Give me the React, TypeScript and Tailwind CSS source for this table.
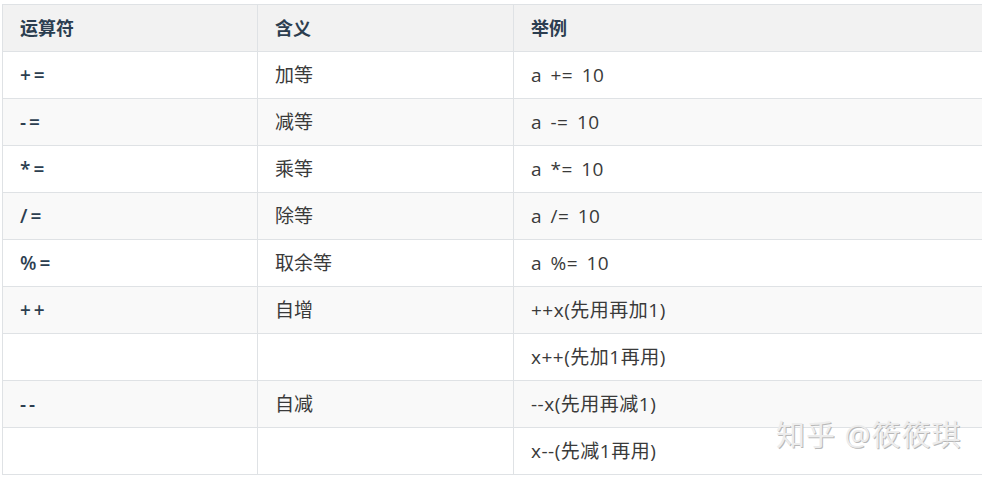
const ROWS: [string, string, string][] = [
  ["+=", "加等", "a += 10"],
  ["-=", "减等", "a -= 10"],
  ["*=", "乘等", "a *= 10"],
  ["/=", "除等", "a /= 10"],
  ["%=", "取余等", "a %= 10"],
  ["++", "自增", "++x(先用再加1)"],
  ["", "", "x++(先加1再用)"],
  ["--", "自减", "--x(先用再减1)"],
  ["", "", "x--(先减1再用)"],
];

export default function App() {
  return (
    <div className="relative h-[477px] w-[982px] overflow-hidden bg-white pl-[2px] pt-[4px] font-['Open_Sans','Noto_Sans_CJK_SC',sans-serif] text-[19px] text-[#3a3a3a]">
      <table className="w-[1000px] table-fixed border-collapse">
        <colgroup>
          <col className="w-[255px]" />
          <col className="w-[256px]" />
          <col />
        </colgroup>
        <thead>
          <tr className="h-[47px] bg-[#f2f2f2]">
            {["运算符", "含义", "举例"].map((h) => (
              <th key={h} className="border border-[#dfe2e5] px-[17px] text-left text-[18px] font-bold text-[#2c3e50]">
                {h}
              </th>
            ))}
          </tr>
        </thead>
        <tbody>
          {ROWS.map(([op, meaning, ex], i) => (
            <tr key={i} className={`h-[47px] ${i % 2 === 1 ? "bg-[#f9f9f9]" : "bg-white"}`}>
              <td className="border border-[#dfe2e5] px-[17px] font-semibold tracking-[3px] text-[#2c3e50]">{op}</td>
              <td className="border border-[#dfe2e5] px-[17px]">{meaning}</td>
              <td className="border border-[#dfe2e5] px-[17px] whitespace-pre tracking-[0.5px] [word-spacing:3px]">{ex}</td>
            </tr>
          ))}
        </tbody>
      </table>
      <div className="absolute left-[776px] top-[413px] text-[29px] tracking-[1px] text-[#ededed] [text-shadow:1px_1px_0_#b8b8b8]">
        知乎 @筱筱琪
      </div>
    </div>
  );
}
